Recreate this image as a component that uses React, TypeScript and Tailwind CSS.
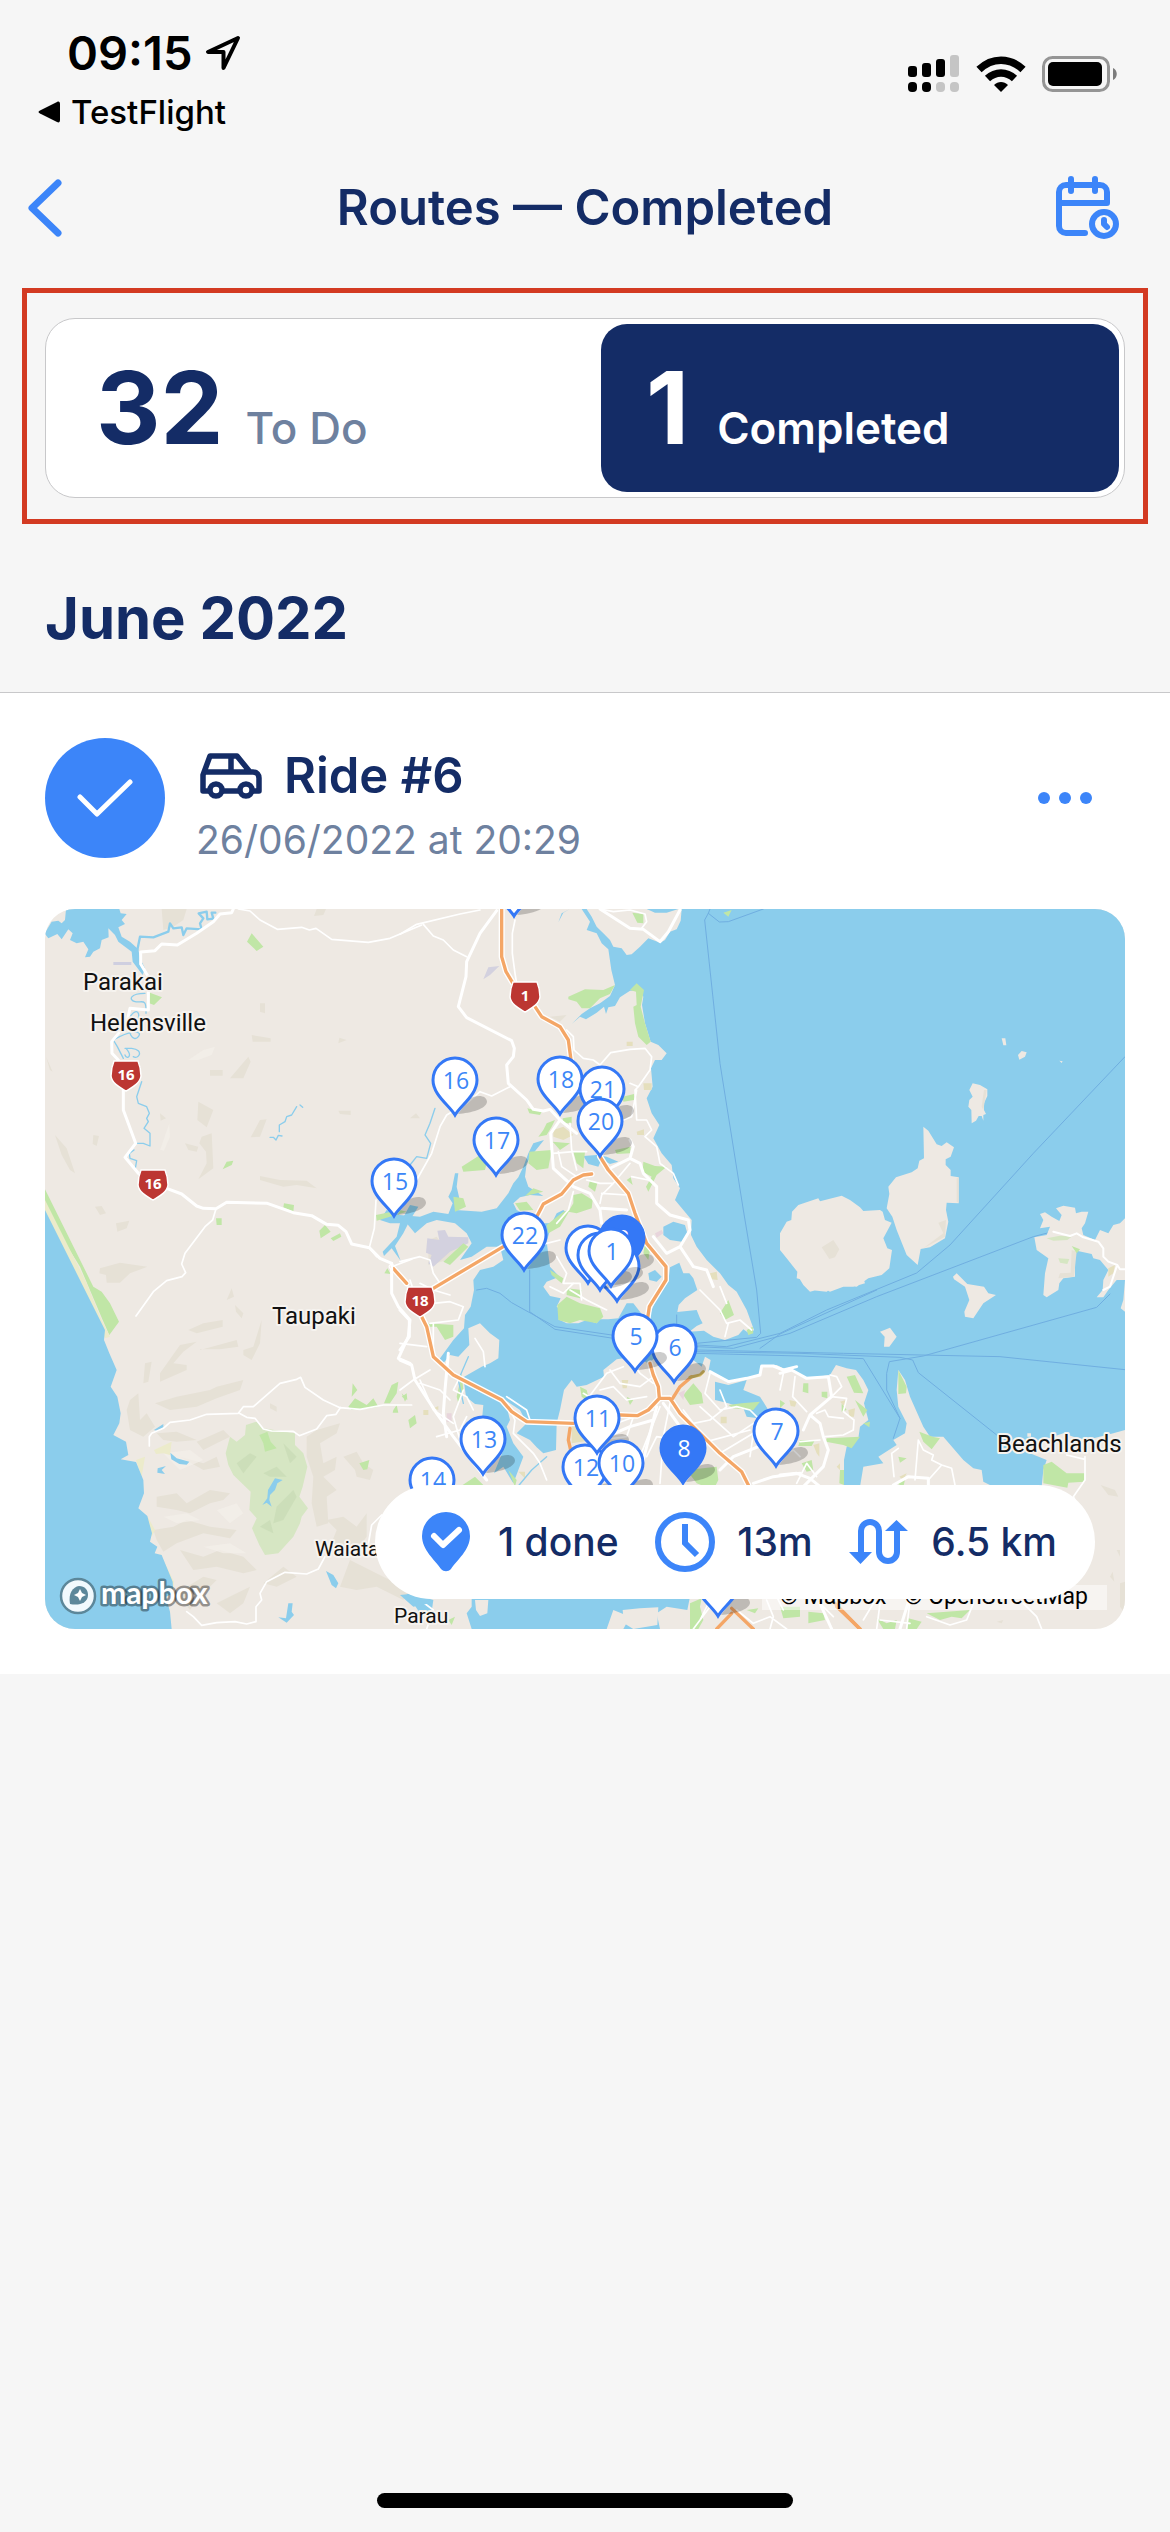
import React from "react";

const pins: { x: number; y: number; label?: string; solid?: boolean }[] = [
  { x: 469, y: -28 },
  { x: 410, y: 171, label: "16" },
  { x: 515, y: 170, label: "18" },
  { x: 557, y: 180, label: "21" },
  { x: 555, y: 212, label: "20" },
  { x: 451, y: 231, label: "17" },
  { x: 349, y: 272, label: "15" },
  { x: 479, y: 326, label: "22" },
  { x: 577, y: 329, label: "2", solid: true },
  { x: 572, y: 357 },
  { x: 543, y: 339 },
  { x: 555, y: 346 },
  { x: 566, y: 342, label: "1" },
  { x: 629, y: 438, label: "6" },
  { x: 590, y: 427, label: "5" },
  { x: 438, y: 530, label: "13" },
  { x: 387, y: 571, label: "14" },
  { x: 540, y: 558, label: "12" },
  { x: 552, y: 509, label: "11" },
  { x: 576, y: 554, label: "10" },
  { x: 638, y: 539, label: "8", solid: true },
  { x: 731, y: 522, label: "7" },
  { x: 673, y: 672 },
];

const shields = [
  { x: 81, y: 166, label: "16" },
  { x: 108, y: 275, label: "16" },
  { x: 480, y: 87, label: "1" },
  { x: 375, y: 392, label: "18" },
];

const places = [
  { x: 38, y: 81, size: "text-[24px]", label: "Parakai" },
  { x: 45, y: 122, size: "text-[24px]", label: "Helensville" },
  { x: 227, y: 415, size: "text-[24px]", label: "Taupaki" },
  { x: 270, y: 647, size: "text-[21px]", label: "Waiata" },
  { x: 349, y: 714, size: "text-[21px]", label: "Parau" },
  { x: 952, y: 543, size: "text-[24px]", label: "Beachlands" },
];

function WestTerrain() {
  return (
    <g transform="translate(-45 -57)" strokeLinejoin="round" strokeLinecap="round">
      <g fill="#e6e1d6">
        <path d="M395 57L470 57L460 90L430 110L400 120ZM860 57H888L880 75L852 78ZM75 735L110 775L135 850L120 840L95 795ZM195 950L215 948L228 970L210 975ZM258 1000L298 992L290 1015L262 1025ZM210 1135L270 1118L352 1130L300 1150L270 1178L230 1178L228 1155L208 1150ZM690 690L710 688L690 740L662 742ZM505 635L550 660L530 712L502 690ZM515 740L545 730L550 835L505 868L530 820L528 785L508 760ZM465 760L505 770L500 785L475 780ZM690 858L750 870L830 872L860 895L800 885L760 890L690 870ZM540 540H578V557H540ZM600 565L655 500L662 515L640 565ZM665 435L722 445V455H668ZM690 340H705V370L690 365ZM925 662H962V675L930 672ZM390 670L408 685L392 692ZM190 735L207 738L200 768L188 762ZM928 443L950 450L925 460ZM48 500L68 545L60 540Z" />
        <path d="M345 1420L365 1415L355 1475L340 1480ZM390 1450L450 1365L500 1355L460 1385L430 1420L470 1425L470 1440L390 1475ZM510 1380L620 1350L625 1370L570 1378L510 1378ZM640 1380L670 1370L695 1290L690 1360L665 1410L640 1395ZM375 1540L440 1520L540 1500L560 1490L640 1470L630 1500L560 1525L500 1550L420 1560ZM475 1320L520 1300L578 1290V1310L500 1330ZM590 1230L605 1195L612 1220ZM615 1245L640 1270L635 1285L618 1265ZM300 1530L325 1510L330 1590L350 1570L375 1610L340 1640L300 1620L290 1560ZM380 1630L440 1625L500 1650L440 1655L400 1650ZM500 1655L580 1620L600 1640L560 1660L520 1680ZM450 1700L520 1720L560 1700L570 1730L520 1740ZM380 1820L440 1810L470 1840L540 1800L600 1810L580 1830L540 1840L480 1870L440 1860L380 1850ZM370 1920L430 1910L470 1890L540 1910L620 1920L600 1945L520 1930L440 1960L400 1985L380 1950ZM450 1980L520 2000L570 1980L640 2000L680 2040L640 2050L560 2030L490 2040ZM830 1640L860 1620L930 1600L920 1630L870 1660L880 1720L920 1700L915 1740L880 1760L920 1800L890 1820L895 1900L860 1910L845 1840L850 1760L830 1700ZM890 1890L940 1880L980 1910L1010 1870L1010 1940L980 1980L900 1970L920 1920ZM960 2010L1060 2060L1140 2100L1120 2130L1040 2090L980 2100L930 2090ZM940 1700L980 1685L1000 1720L1030 1740L1020 1770L980 1760L975 1740ZM440 2110L520 2060L560 2070L500 2130L480 2160ZM560 2140L620 2110L660 2090L640 2140L600 2170ZM700 2080L760 2030L800 2060L740 2090ZM720 1540L740 1550V1565L720 1555Z" />
      </g>
      <g fill="#f3efe9" opacity="0.7">
        <path d="M475 510L520 480L555 470L545 495L505 510ZM390 780L418 700L420 740L402 782ZM400 1690L480 1680L520 1710L450 1740ZM400 1880L470 1870L510 1890L440 1900ZM520 1970L600 1960L650 1990L580 1990ZM560 1860L620 1840L640 1870L600 1900Z" />
      </g>
      <path fill="#d6e6c3" d="M648 1605L680 1595L700 1615L795 1630L795 1665L820 1690L832 1730L818 1790L808 1820L834 1855L815 1880L810 1900L790 1940L745 1990L705 1995L688 1965L666 1915L680 1885L658 1860L662 1805L610 1755L595 1725L587 1690L600 1640L620 1655L645 1635Z" />
      <path fill="#c8dab5" opacity="0.7" d="M620 1720L660 1690L680 1700L640 1750ZM700 1750L740 1730L770 1760L720 1760ZM740 1850L790 1800L800 1820L760 1890L730 1900ZM690 1910L720 1890L730 1930ZM760 1660L800 1700L780 1720Z" />
      <g fill="#c0e6a6">
        <path d="M688 1635L712 1625L722 1655L740 1675L705 1685L700 1660Z" />
        <path d="M665 130L700 170L680 183L651 155ZM360 308L396 322L372 345L358 340ZM762 940L792 945L790 965L760 952ZM558 985H575V1005H560ZM868 1022L885 1005L902 1025L872 1045ZM902 1045L930 1030L934 1040L910 1053ZM578 838L590 815L610 812L605 825ZM1038 975L1110 960L1130 965L1040 992ZM965 1520L968 1480L982 1500ZM955 1550L975 1525L1010 1545L1030 1525L1045 1550L1020 1555L965 1560ZM1062 1540L1085 1485L1105 1475L1100 1510L1080 1540ZM1090 1560L1100 1545L1105 1568H1088ZM988 1720L1018 1710L1012 1738L1000 1740ZM1115 1510L1130 1525L1125 1535ZM1063 1150L1072 1135L1082 1152Z" />
        <path d="M45 898L190 1190L215 1205L240 1240L267 1295L238 1335L218 1290L150 1130L45 960Z" />
      </g>
      <path fill="#ecebcb" d="M45 930L168 1175L215 1290L240 1340L225 1345L150 1175L45 965ZM318 1710L345 1700L335 1760ZM352 1878L375 1920L365 1940ZM390 1990L432 2075L430 2100L400 2050ZM372 1680L425 1655L420 1695L400 1690L378 1692Z" />
      <path fill="#8bcdec" d="M45 960L160 1190L225 1320L222 1350L238 1390L260 1440L242 1490L262 1520L272 1570L268 1600L250 1635L288 1655L295 1695L272 1708L318 1716L340 1770L342 1810L325 1855L352 1878L366 1930L360 1955L382 1970L374 1990L395 1995L428 2075L430 2110L408 2120L420 2165L425 2217H45Z" />
      <path fill="#8bcdec" d="M30 145L50 120L65 95L85 92L95 100L105 90L108 57H268L272 70L290 72L275 90L285 102L265 112L275 140L300 155L325 178L330 205L345 235L338 255L308 215L305 185L265 155L255 135L235 115L236 142L215 150L210 175L190 185L180 200L165 202L175 178L160 155L140 160L120 150L128 130L115 118L95 148L82 132L55 145L45 132Z" />
      <g fill="none" stroke="#8bcdec" strokeWidth="7">
        <path d="M322 180L330 140L370 142L415 125L420 100L430 115L455 112L460 135L470 115L515 118L510 100L520 85L506 70L530 65L532 88L550 86L545 68L556 68" />
      </g>
      <g fill="none" stroke="#8bcdec" strokeWidth="4">
        <path d="M345 310C300 310 295 330 315 335S350 320 348 370M300 380C330 340 335 390 310 405S310 460 325 440S300 420 250 450L262 470L280 505M285 475L305 475M288 475C310 500 290 510 285 495M305 475C345 480 325 510 310 500M335 575L320 620L325 640L350 650L358 670L350 685L355 695L342 715L360 730V768L340 760H320M312 780L298 790L300 805L320 812L316 835" />
        <path d="M800 650L785 675L770 680L765 695L748 705V725M720 742H730L738 750L745 736L756 738M810 645L818 652" />
      </g>
      <path fill="#8bcdec" d="M1165 950L1140 945L1110 1000L1100 1040L1058 1085L1062 1098L1085 1075L1112 1112L1095 1068L1120 1030L1140 990ZM372 1620L400 1602L400 1612L382 1624ZM421 1688L440 1705L478 1715L470 1724L448 1722L424 1708ZM383 1735L408 1728L395 1740L405 1752L382 1748ZM735 1765L758 1770L742 1780L735 1800L720 1815L718 1830L725 1850L710 1838L697 1845L712 1825L714 1800ZM888 2043L910 2055L925 2080L918 2095L905 2085ZM775 2140H788L785 2165L792 2175L770 2198L745 2182L768 2185ZM1110 2115L1160 2110L1200 2140L1150 2150Z" />
      <rect x="250" y="216" width="54" height="9" fill="#cfcfe0" />
      <g fill="none" stroke="#fff" strokeWidth="9">
        <path d="M610 57L605 68L570 72L550 95L500 130L442 165L395 162L375 182L332 186V222L355 260L355 360L300 355L290 400L245 455L246 490L265 510M280 595V660L317 760L285 802L325 850M410 895L455 912L500 948L520 955L558 956L590 937L712 940L790 968L845 977L890 1003L925 1006L948 1025L965 1062L1018 1073L1050 1105L1085 1120" />
        <path d="M1085 1120V1210L1105 1250L1140 1290L1135 1340L1105 1405L1140 1420" />
      </g>
      <g fill="none" stroke="#fff" strokeWidth="5">
        <path d="M625 57L660 63L690 90L742 118L815 112L838 120L858 115L905 148L1015 157L1080 145L1175 105M558 956L548 990L525 1010L465 1090L455 1122L467 1148L456 1160L410 1172L370 1205L318 1278M1038 930L1033 1015L1018 1073L1040 1100M1085 1130L1145 1108" />
        <path d="M358 1668V1640L365 1630L400 1615L420 1597L480 1590L530 1573L625 1570L640 1550H670L750 1480L800 1468L812 1462L825 1492L880 1530L930 1553L990 1558L1060 1545L1145 1545M628 1570L650 1582L675 1585L700 1617L725 1623L790 1624L808 1637L860 1617L890 1577L918 1573L932 1552M1055 1875L1025 1905L1010 1990M885 2000L865 2037L830 2052L765 2047L710 2075L690 2110L695 2130L678 2150V2195L650 2202L615 2195L560 2198L515 2206L490 2180L470 2165" />
      </g>
    </g>
  );
}

function CentralTerrain() {
  return (
    <g transform="translate(1065 -57)" strokeLinejoin="round" strokeLinecap="round">
      <path
        fill="#8bcdec"
        d="M845 57L842 92L830 118L810 125L795 150L780 158L745 145L720 170L695 193L680 195L665 175L640 170L630 150L610 130L590 110L575 80L560 57H545L570 95L560 120L590 130L605 160L625 178L634 240L645 285L630 318L600 340L570 355L545 372L515 402L540 380L558 388L590 368L612 350L618 372L625 352L645 348L660 322L690 302L718 300L730 320L726 345L735 400L752 455L775 465L800 490L785 510L765 510L753 535L758 590L740 625L755 670L778 705L760 745L785 790L815 825L820 865L840 895L825 930L850 960L875 990L873 1035L890 1070L920 1110L960 1150L985 1185L1010 1205L1040 1260L1062 1320L1050 1332L1030 1318L1015 1335L975 1350L940 1340L912 1322L868 1325L890 1308L908 1300L900 1285L890 1260L832 1266L836 1245L855 1225L892 1200L880 1165L868 1150L850 1150L838 1118L810 1132L805 1175L770 1220L748 1280L735 1285L700 1240L680 1240L655 1285L625 1288L600 1288L590 1300L560 1290L535 1300L500 1300L475 1288L490 1265L470 1250L482 1225L450 1218L430 1190L440 1175L478 1160L450 1130L440 1055L450 1020L480 1000L500 970L490 960L470 970L455 1000L430 1000L400 985L350 960L340 940L360 922L390 915L430 918L385 890L375 860L380 820L400 790L432 750L400 760L385 790L370 830L355 862L340 880L325 910L290 955L245 965L200 962L165 960L178 925L170 890L175 850H165L155 900L145 920L158 940L145 972L100 965L60 980L0 975L-40 960L-60 990L-30 1000L20 1000L45 1030L80 1000L110 990L165 1000L200 1030L215 1060L180 1110L215 1100L260 1070L300 1070L310 1110L280 1130L240 1140L220 1170L222 1200L212 1250L195 1275L192 1315L160 1350L118 1408L130 1420L150 1395L175 1400L208 1365L205 1315L240 1300L270 1330L298 1350L295 1405L270 1420L245 1430L190 1462L198 1520L225 1542L250 1545L245 1600L280 1640L310 1680L282 1750L310 1730L340 1780L370 1700L340 1660L320 1610L330 1590L315 1530L360 1560L380 1600L350 1630L390 1650L410 1672L430 1690L468 1680L470 1600L480 1560L492 1500L515 1470L530 1490L560 1485L612 1460L610 1440L650 1408L700 1400L745 1420L770 1400L880 1410L905 1430L915 1400L932 1410L925 1445L985 1480L1040 1465L1080 1455L1080 1430L1130 1425L1160 1440L1180 1440L1220 1465L1290 1455L1308 1425L1340 1435L1368 1440L1390 1470L1405 1500L1392 1540L1405 1590L1380 1610L1375 1645L1340 1670L1332 1710V1790H1380L1390 1730L1450 1720L1435 1700L1490 1665L1480 1650L1515 1630L1520 1600L1495 1550L1490 1500L1495 1440L1515 1470L1530 1520L1570 1610L1590 1640L1630 1640L1690 1710L1720 1735L1745 1740L1750 1775L1800 1800L1925 1790L1930 1740L1940 1710L1890 1690L1930 1650L1990 1630L2020 1640L2060 1650L2140 1630L2175 1620V57Z"
      />
      <path fill="#8bcdec" d="M475 97L485 70L510 57L490 68ZM740 57L765 68L800 68L835 57ZM550 798L590 795L620 800L655 815L630 822L605 808L595 830L565 822ZM790 1010L820 995L855 1005L862 1030L845 1055L810 1050L790 1035ZM745 1150L765 1140L785 1160L770 1175L748 1170ZM945 1475L985 1485L1040 1470L1030 1500L1080 1520L1105 1560L1075 1585L1040 1580L1030 1555L985 1540L945 1530ZM215 2110L240 2050L700 2110L850 2090L870 2120L862 2160L800 2150L770 2170L780 2217H670L690 2180L640 2160L620 2217H215L200 2170L215 2150ZM-10 2105L50 2115L100 2130L95 2165L60 2170L40 2140Z" />
      <path fill="#eee9e3" d="M225 2130H265L262 2170L240 2178L228 2160ZM668 2160L720 2155L775 2152L772 2205L700 2217L672 2200ZM780 2165L850 2175V2185L785 2180Z" />
      <path fill="#e6e1d6" d="M85 1050L110 1040L130 1065L200 1060L165 1105L85 1125ZM450 380L500 375L480 395ZM30 685L48 670L60 685ZM-30 855L20 850L40 880L-30 880Z" />
      <path fill="#d3d1df" d="M112 1022L135 1020L145 1040L205 1042L205 1060L150 1085L100 1130L85 1120L95 1095L78 1088L82 1045L118 1050ZM250 268L265 232L298 228L270 255Z" />
      <path
        fill="#c0e6a6"
        d="M505 320L555 298L610 300L645 285L630 312L600 325L570 355L545 355L530 335L505 328ZM710 280L732 300L722 350L735 400L752 455L740 465L715 440L705 400L700 350L710 345L708 305L690 300ZM697 68L730 72V100L712 98ZM970 68L995 60L985 80ZM185 830L240 795L260 820L255 840L190 845ZM388 785L455 780L445 835L410 840L385 820ZM430 720L440 700L465 690L455 710L440 735L415 740ZM160 920L190 925L198 950L165 965ZM345 940L380 935L400 960L360 962ZM730 815L765 828L800 830L770 855L745 905L738 890L755 860L728 845ZM520 915L545 910L578 930L575 955L530 970L505 965L520 940ZM440 1005L490 965L510 960L480 1010L445 1030ZM458 755L510 760L480 780ZM520 785H555L550 835L530 820ZM645 780L692 770L690 790L650 792ZM668 620L702 612V630L670 635ZM382 655L425 665L420 675L388 670ZM488 685L515 680V700L490 700ZM130 1115L190 1060L205 1070L150 1125ZM570 870L592 880L585 905L565 890ZM400 895L430 905L375 918ZM680 870L692 862L698 885ZM735 1060L750 1080L745 1110L730 1090Z"
      />
      <path
        fill="#c0e6a6"
        d="M472 1245L500 1220L540 1240L600 1255L610 1280L590 1300L540 1290L510 1300L475 1290ZM500 1195L545 1200L540 1225L500 1215ZM85 1300L160 1305V1340L135 1350L110 1310L80 1310ZM960 1270L985 1230L1002 1275L975 1290ZM1040 1320L1058 1310L1060 1330L1045 1335ZM850 1515L880 1480L905 1510L910 1540L870 1545ZM860 1740L950 1730L955 1770L940 1800L890 1780ZM180 1790L225 1760L250 1785ZM170 1520L185 1450L190 1500L175 1540ZM680 1520L700 1530L690 1545ZM985 1545L1025 1540L1080 1535L1060 1560L1000 1555ZM5 1520L20 1510L22 1530ZM25 1590L45 1575L50 1600L30 1615ZM540 1490L560 1500L570 1540L545 1520ZM870 2140L905 2125L900 2150L910 2190L895 2217H870ZM1040 2160L1075 2155L1065 2170ZM145 2190L165 2180L155 2205ZM1140 2150H1200V2180L1150 2185ZM1120 1570L1165 1560L1170 1590ZM325 1740L350 1770L345 1790ZM450 1140L490 1165L485 1180L455 1155Z"
      />
      <path fill="#e5dfbd" d="M680 455H698V468H680ZM710 725L732 718V735H712ZM460 720L490 710L520 735L490 750L460 740ZM730 580H755V600H732ZM930 1150L950 1145L953 1170L935 1168ZM515 1590L570 1570L600 1600L580 1650L515 1660ZM665 1470H685L680 1495H668ZM70 1560H85V1575H70ZM100 1555L115 1548V1560ZM355 1745H375V1765ZM962 1580H980V1600H962ZM1060 2090L1090 2080L1080 2110Z" />
      <path fill="#e8d5dc" d="M765 1030L785 1020L790 1030L770 1043ZM835 1510L855 1500L850 1530ZM140 1570H155V1595H140Z" />
      <g fill="none" stroke="#8bcdec" strokeWidth="4">
        <path d="M105 655L90 700L75 735L92 760L80 805L50 800L30 825L0 815M540 1100L530 1130M205 1400L175 1470L190 1540M345 1800L395 1740L440 1700" />
      </g>
      <g fill="none" stroke="#fff" strokeWidth="5">
        <path d="M0 133L50 103L180 72L240 60M70 103L100 138L130 150L160 180L200 200M345 90L337 130V190L345 250L350 280M500 420L520 440L522 480L550 505L580 510L600 525L632 488L690 478L735 475L755 500L750 540L715 590L690 580M715 590L705 600L710 690L740 690L755 720L735 740L770 770L780 820L820 850L835 885M710 600L695 680L670 690M240 605L275 618L330 590M240 605L200 640L140 675L120 710L95 790L50 870M600 600L590 550" />
        <path d="M460 790L520 785L560 785M475 785L485 830L530 860M510 700L515 780L530 840M640 880L605 915L600 940M605 910L680 915M560 870L600 880L640 880L690 820M520 905L505 960L470 1000M695 860L745 870M400 1080L440 1060L480 1050M500 1050L510 1120L540 1150L580 1170M470 1100L500 1150L490 1180L540 1180L545 1230M0 1115L60 1100L90 1110L100 1150L120 1180M60 1180L100 1200L150 1215" />
        <path d="M30 1170L40 1200L100 1240L150 1235L190 1250L175 1290L90 1300M100 1300L100 1400M0 1360L80 1370M225 1345L250 1385L255 1430M175 1470L160 1500L200 1520L220 1560M0 1500L40 1470L90 1440M60 1470L100 1560L160 1600M190 1500L160 1580L180 1650M60 1480L120 1500L150 1530M110 1640L180 1620L200 1580M330 1560L345 1590L340 1630L400 1690L420 1720L440 1770M320 1520L380 1560L390 1590" />
        <path d="M560 1530L620 1450L670 1430M600 1500L640 1490L680 1530L740 1520M630 1440L660 1480L720 1490L760 1460M690 1410L720 1450L760 1480M550 1510L600 1540L650 1560M700 1580L680 1640L600 1650M650 1600L760 1560M720 1700L780 1550M740 1700L770 1640L840 1650L880 1620M810 1540L790 1640L780 1780M850 1560L880 1600L930 1590L980 1550L960 1500M930 1450L915 1510L960 1560L1010 1550L1050 1560L1090 1600M900 1550L1000 1640L1060 1600M860 1700L900 1660L1050 1620M960 1690L1060 1630L1050 1700M985 1300L975 1340M900 1200L960 1260L980 1300L1020 1290L1055 1320M960 1190L980 1240M450 1190L490 1210L520 1180M510 1200L560 1230L620 1260" />
        <path d="M80 2217L100 2160L60 2130M880 2217L930 2150L960 2130M1010 2160L1060 2200L1110 2180L1160 2217M1100 2130L1120 2180L1110 2217M1130 2120L1150 2160M930 2130L900 2190" />
        <path d="M600 57L640 65L690 60L735 72L740 95L725 115" />
      </g>
      <g fill="none" stroke="#fff" strokeWidth="9">
        <path d="M290 62L240 130L200 215L198 260L175 350L200 383L335 452L343 475L340 500L320 525L325 580L380 630L400 658L430 663L450 658L480 690L530 730M480 690L452 730L460 835L520 890L570 910L600 960L605 1000M605 955L680 960M620 840L690 805L700 770L690 750M690 805L720 820L730 850L770 890V940L810 975L865 990L870 1020L840 1070L800 1090L760 1040M840 1070L880 1130L920 1140L940 1190M600 57L690 115L730 118L780 155L805 125L840 60" />
        <path d="M0 1260L28 1290V1340L0 1380M0 1410L35 1425L45 1470L110 1570L160 1640L260 1770M145 1390L135 1500L130 1570L140 1640M620 1640L690 1610L760 1590M770 1550L745 1650L720 1750M790 1540L840 1610M930 1445L985 1475L1040 1465L1080 1455L1085 1428L1120 1428L1150 1440L1190 1430M960 1740L1000 1700L1100 1660M1060 1780L1120 1760L1200 1750" />
      </g>
      <g fill="none" stroke="#fff" strokeWidth="18">
        <path d="M305 57V200L318 245L345 290M405 350L425 380L480 410L505 450L513 510M575 852L550 855L520 870L485 912L430 942L400 1000M310 1070L100 1195M600 800L625 840L685 910L705 970L740 1060L798 1130V1170L748 1250L742 1290" />
        <path d="M-25 1130L20 1180M65 1280L80 1310L100 1400L160 1455L305 1530L335 1565L380 1595L520 1600M660 1575L712 1577L745 1560L778 1525L810 1525L840 1570L900 1630L960 1690L1025 1745L1045 1785M750 1420L760 1455L775 1490L778 1525" />
      </g>
      <g fill="none" stroke="#f4a666" strokeWidth="10">
        <path d="M305 57V200L318 245L345 290M405 350L425 380L480 410L505 450L513 510M575 852L550 855L520 870L485 912L430 942L400 1000M310 1070L100 1195M600 800L625 840L685 910L705 970L740 1060L798 1130V1170L748 1250L742 1290" />
        <path d="M-25 1130L20 1180M65 1280L80 1310L100 1400L160 1455L305 1530L335 1565L380 1595L520 1600M660 1575L712 1577L745 1560L778 1525L810 1525L840 1570L900 1630L960 1690L1025 1745L1045 1785M750 1420L760 1455L775 1490L778 1525" />
        <path d="M510 1615L505 1650L512 1680M818 1525L840 1490L875 1460M995 2155L1060 2217M995 2170L950 2217M1310 2150L1380 2217" />
      </g>
      <path fill="none" stroke="#d4b85f" strokeWidth="9" d="M870 1462L900 1455L910 1445" />
      <g fill="none" stroke="#6faee0" strokeWidth="3">
        <path d="M1090 57L985 95L958 96L925 70L930 57M925 70L914 90L960 520L1030 960L1070 1200L1082 1330L1070 1342L890 1360M389 1140V1265L465 1318L640 1345M230 1200L260 1195L300 1210L335 1238L465 1310L635 1335M830 1310V1275M890 1380L1330 1390L1800 1400L2175 1439M890 1385L1200 1390L1500 1402L1538 1410L1555 1448L1790 1635M890 1390L1200 1398L1390 1406L1500 1585L1480 1645M1500 1585L1460 1500V1450L1468 1415L1570 1398L2090 1252L2130 1212M890 1365L980 1370L1140 1330L1280 1260L1550 1149L1650 1065L1900 790L2175 500M890 1370L1000 1375L1170 1330L1430 1220L1900 1040L1950 1027M1080 1375L1140 1332L1430 1200" />
      </g>
    </g>
  );
}

function EastTerrain() {
  return (
    <g transform="translate(2205 -57)" strokeLinejoin="round" strokeLinecap="round">
      <path
        fill="#eee9e3"
        d="M665 445H676L679 466H670ZM714 495L725 483L740 487L735 500L718 509ZM838 512L848 514L845 519ZM578 580L600 585L622 598V618L612 640V660L618 672L610 675V692L605 678H596L588 692L575 700L574 660L565 650L568 630L578 620L568 600ZM430 710L445 722L470 763L485 768L500 757L522 772L512 800L497 808V825L512 840V858L536 862V940L500 938L498 960L505 995L495 1045L450 1072L422 1077L413 1125L380 1095L350 1020L337 980L320 955L328 912L325 890L348 862L395 847L413 835L418 812L432 805ZM115 925L120 934L185 917L210 930L240 952L250 963L300 960L308 965L315 990L335 998L310 1045L322 1075L336 1080L328 1135L305 1155L265 1165L230 1190L190 1185L160 1190L140 1205L90 1200L70 1170L50 1165L52 1145L20 1105L0 1080V1030L20 995L34 990L36 965L55 945ZM55 1160L250 1165L255 1180L220 1190L190 1190L150 1205L130 1195L90 1205L70 1185ZM519 1160L530 1150L545 1165L562 1182L612 1190L625 1210L648 1215L610 1240L580 1285L555 1280L553 1265L568 1230L555 1190L522 1168ZM300 1325L330 1313L350 1340L328 1370L312 1370L314 1340ZM780 1015L790 990L780 972L795 967L815 980L838 993L845 975L828 955L850 947L885 953L888 970L905 965L925 965L915 1000L905 1015L910 1035L945 1050L960 1020L985 1030L1000 1005L1020 1000L1035 985V1265L1022 1255L1030 1230L1035 1170H1010L985 1200L970 1222L950 1222L968 1200L970 1170L985 1140L960 1110L940 1105L935 1092L890 1082L885 1100V1160L850 1165L838 1180L835 1200L800 1222L790 1215L795 1150L805 1105L770 1080L763 1042L800 1035L810 1010ZM742 1630H753V1640H742Z"
      />
      <path fill="#e6e1d6" d="M125 1072L160 1050L178 1078L165 1102L148 1107ZM475 998L498 990L495 1040L430 1075L490 1030ZM530 865L536 862V938L530 935ZM612 600L620 600L610 660L605 650ZM875 1080L890 1085L882 1160L835 1165L840 1150L872 1148ZM962 1785L1005 1800L1015 1820L985 1815ZM990 2060L998 2045L1003 2075ZM1020 2080L1035 2075V2170L1020 2150ZM1010 1980H1020V2000ZM650 2195L670 2190L665 2200Z" />
      <path fill="#c0e6a6" d="M875 1068L900 1078L890 1090ZM355 1440L380 1490L378 1510L355 1512ZM790 1725L815 1715L860 1750L913 1750V1775L865 1778L862 1793L790 1780ZM418 1625L458 1640L480 1645L455 1678L430 1655ZM140 1645L240 1640L215 1675L190 1665L138 1655ZM200 1460L225 1455L250 1510L222 1508ZM70 1480H85V1510L68 1505ZM125 1505H142V1525L125 1520ZM225 1530L262 1560L250 1580ZM60 1650H105L95 1668H55ZM65 1720L95 1710L100 1740L80 1745ZM180 1740H192V1785L178 1780ZM355 1700L380 1705L360 1718ZM250 1600L270 1595L268 1612ZM185 1540L200 1560L185 1565ZM0 1530L15 1540L0 1555ZM85 2165L130 2170L135 2190L85 2200ZM290 2185L320 2200L350 2190L345 2217H310ZM385 2185L425 2195L410 2217H382ZM440 2170L500 2165L570 2160L545 2185L515 2180L480 2190ZM350 1780L375 1770L370 1790Z" />
      <path fill="#d6e6c3" d="M800 1045L840 1037L875 1040L862 1050L820 1052ZM835 1105L868 1107L862 1122L840 1118Z" />
      <path fill="#e5dfbd" d="M28 1530L50 1535L45 1550L32 1548ZM180 1535L198 1530L195 1550ZM205 1560L225 1555L222 1580H208ZM100 1665L118 1660V1700L110 1690ZM985 1135L1005 1125L1000 1150L985 1160ZM358 1760L380 1750L370 1770ZM170 1730L180 1720V1740Z" />
      <g fill="none" stroke="#fff" strokeWidth="5">
        <path d="M10 1450L0 1500M45 1460L38 1520L80 1565M150 1455L170 1460L185 1490L155 1520L200 1525L190 1565L222 1590L220 1620L190 1635L135 1640M110 1570L135 1560L145 1580L190 1585M60 1655L120 1650M0 1700L40 1680L60 1700M50 1780L80 1720L110 1760M55 1640L30 1600M355 1675L335 1690L342 1760M415 1650L405 1770M415 1650L430 1680L460 1695L455 1710L485 1725L515 1735L525 1785M485 1725L445 1770M290 2217L300 2140M250 2190L280 2140M380 2217L390 2130M440 2180L510 2205L560 2190L580 2140M730 2140L770 2180L785 2217M915 1700V1770L880 1820L885 1830M860 1695L915 1708M300 2190L390 2200M120 2140L160 2180" />
      </g>
      <g fill="none" stroke="#fff" strokeWidth="9">
        <path d="M0 1450L35 1440L80 1465L145 1460L155 1520L90 1575L70 1620M90 1575L120 1600L130 1640L145 1680L130 1730L70 1790M0 1755L50 1750L90 1765L120 1790M340 1785L385 1760L445 1765V1790M120 2140L155 2217M390 2120L360 2217" />
        <path strokeWidth="6" d="M820 1025L870 1038L890 1030L910 1042L955 1055L970 1075V1100L985 1115L1012 1125L1020 1138H1035M1010 1130L990 1190L970 1200" />
      </g>
      <g fill="none" stroke="#f4a666" strokeWidth="10">
        <path d="M165 2140L240 2217" />
      </g>
    </g>
  );
}

function RouteMap() {
  return (
    <svg viewBox="0 0 1080 720" className="block h-auto w-full bg-[#eee9e3]" role="img" aria-label="Map of route stops around Auckland">
      <g transform="scale(0.333333)">
        <CentralTerrain />
        <WestTerrain />
        <EastTerrain />
      </g>
      {shields.map((s, i) => (
        <g key={i} transform={`translate(${s.x} ${s.y})`}>
          <path d="M-12 -14H12C15 -7 15 -3 15 1C14 9 5 13 0 16C-5 13 -14 9 -15 1C-15 -3 -15 -7 -12 -14Z" fill="#bc3632" stroke="#fff" strokeWidth="1.5" />
          <text y="5" textAnchor="middle" fill="#fff" className="font-['Noto_Sans',sans-serif] text-[15px] font-bold">
            {s.label}
          </text>
        </g>
      ))}
      {places.map((p) => (
        <text
          key={p.label}
          x={p.x}
          y={p.y}
          fill="#111"
          stroke="#f6f3ef"
          strokeWidth="4"
          strokeLinejoin="round"
          paintOrder="stroke"
          className={`font-[Roboto,sans-serif] ${p.size}`}
        >
          {p.label}
        </text>
      ))}
      {pins.map((p, i) => (
        <g key={i} transform={`translate(${p.x} ${p.y})`}>
          <path d="M3 34L14 19C22 14 32 15 32 22C31 29 16 33 3 34Z" fill="#000" opacity="0.2" />
          <path
            d="M0 35C-6 25 -22 15 -22 0A22 22 0 0 1 22 0C22 15 6 25 0 35Z"
            fill={p.solid ? "#3478f6" : "#fff"}
            stroke="#3478f6"
            strokeWidth="3"
          />
          {p.label && (
            <text x="1" y="9" textAnchor="middle" fill={p.solid ? "#fff" : "#3b86f7"} className="font-['Open_Sans',sans-serif] text-[23px]">
              {p.label}
            </text>
          )}
        </g>
      ))}
      <g>
        <circle cx="33" cy="687" r="17" fill="#f1f9fd" stroke="#5c879a" strokeWidth="2.5" />
        <path d="M25 695C23 684 28 678 34 677C40 677 43 681 43 686C43 694 34 697 25 695Z" fill="#5c879a" />
        <path d="M35 680L37 684L41 686L37 688L35 692L33 688L29 686L33 684Z" fill="#fff" />
        <text
          x="56"
          y="695"
          fill="#fff"
          stroke="#000"
          strokeOpacity="0.38"
          strokeWidth="5"
          strokeLinejoin="round"
          paintOrder="stroke"
          className="font-[Lato,sans-serif] text-[30px] font-bold"
        >
          mapbox
        </text>
      </g>
    </svg>
  );
}

function StatusBar() {
  return (
    <div className="flex justify-between pr-[52px] pl-[38px] text-black">
      <div>
        <div className="flex h-[60px] items-center gap-3 pl-[29px] pt-[46px]">
          <span className="text-[47px] leading-[56px] font-semibold">09:15</span>
          <svg viewBox="0 0 36 40" className="h-[40px] w-[36px]" fill="none" stroke="currentColor" strokeWidth="4" strokeLinejoin="round" aria-hidden="true">
            <path d="M33 5L3 19H18.500V35Z" />
          </svg>
        </div>
        <button className="mt-[30px] flex items-center gap-[11px] text-[33px] leading-[44px] font-medium">
          <svg viewBox="0 0 22 22" className="h-[22px] w-[22px]" fill="currentColor" aria-hidden="true">
            <path d="M2 9.500L19 1C21 0 22 1 22 3V19C22 21 21 22 19 21L2 12.500C0 11.500 0 10.500 2 9.500Z" />
          </svg>
          TestFlight
        </button>
      </div>
      <div className="mt-[54px] flex h-[40px] items-center gap-[16px]">
        <svg viewBox="0 0 52 38" className="h-[38px] w-[52px]" aria-hidden="true">
          <g fill="#000">
            <rect x="0" y="11" width="9" height="11" rx="3" />
            <rect x="14" y="8" width="9" height="14" rx="3" />
            <rect x="28" y="4" width="9" height="18" rx="3" />
            <rect x="0" y="27" width="9" height="10" rx="4" />
            <rect x="14" y="27" width="9" height="10" rx="4" />
          </g>
          <g fill="#c5c5c5">
            <rect x="42" y="0" width="9" height="22" rx="3" />
            <rect x="28" y="27" width="9" height="10" rx="4" />
            <rect x="42" y="27" width="9" height="10" rx="4" />
          </g>
        </svg>
        <svg viewBox="0 0 50 36" className="h-[36px] w-[50px]" fill="none" stroke="#000" strokeWidth="7.500" aria-hidden="true">
          <path d="M3 13.500C16 1 34 1 47 13.500" />
          <path d="M11.500 22.500C19.500 15 30.500 15 38.500 22.500" />
          <path d="M18 29C22 25 28 25 32 29L25 36Z" fill="#000" stroke="none" />
        </svg>
        <svg viewBox="0 0 76 36" className="h-[36px] w-[76px]" aria-hidden="true">
          <rect x="1.500" y="1.500" width="65" height="33" rx="9" fill="none" stroke="#959595" strokeWidth="3" />
          <rect x="6" y="6" width="54" height="24" rx="5" fill="#000" />
          <path d="M71 12C76 14 76 22 71 24Z" fill="#7c7c7c" />
        </svg>
      </div>
    </div>
  );
}

export default function App() {
  return (
    <div className="flex min-h-screen flex-col bg-[#f6f6f6] font-[Inter,sans-serif] text-[#142c66]">
      <StatusBar />

      <header className="mt-[32px] flex h-[84px] items-center justify-between pr-[50px] pl-[26px]">
        <button aria-label="Back" className="w-[90px]">
          <svg viewBox="0 0 38 60" className="h-[60px] w-[38px]" fill="none" stroke="#3c85f9" strokeWidth="7" strokeLinecap="round" strokeLinejoin="round">
            <path d="M32 5L6 30L32 55" />
          </svg>
        </button>
        <h1 className="text-[49px] leading-[60px] font-semibold">Routes — Completed</h1>
        <button aria-label="Schedule" className="flex w-[66px] justify-end">
          <svg viewBox="0 0 64 64" className="h-[64px] w-[64px]" fill="none" stroke="#3c85f9" strokeWidth="6" strokeLinecap="round" strokeLinejoin="round">
            <path d="M29 57H10C6 57 3 54 3 50V16C3 12 6 9 10 9H44C48 9 51 12 51 16V27H3M15 3V15M39 3V15" />
            <circle cx="48" cy="48" r="12" />
            <path d="M48 44V48L51 51" />
          </svg>
        </button>
      </header>

      <section className="mx-[22px] mt-[38px] border-[5px] border-[#d33a22] px-[18px] pt-[25px] pb-[21px]">
        <div className="grid grid-cols-2 rounded-[30px] border border-[#c8c8ca] bg-white p-[5px]" role="tablist">
          <button role="tab" aria-selected="false" className="flex h-[168px] items-baseline gap-[22px] pt-6 pl-[45px] text-left">
            <span className="text-[100px] leading-[120px] font-bold">32</span>
            <span className="text-[44px] leading-[52px] font-medium text-[#6e819f]">To Do</span>
          </button>
          <button role="tab" aria-selected="true" className="ml-4 flex h-[168px] items-baseline gap-[28px] rounded-[26px] bg-[#142c66] pt-6 pl-[45px] text-left text-white">
            <span className="text-[100px] leading-[120px] font-bold">1</span>
            <span className="text-[44px] leading-[52px] font-semibold">Completed</span>
          </button>
        </div>
      </section>

      <h2 className="border-b border-[#c8c8ca] px-[45px] pt-[58px] pb-[38px] text-[58px] leading-[72px] font-bold">June 2022</h2>

      <article className="bg-white px-[45px] py-[45px]">
        <div className="flex h-[120px] items-start">
          <span className="flex h-[120px] w-[120px] items-center justify-center rounded-full bg-[#3c85f9]">
            <svg viewBox="0 0 56 40" className="h-[40px] w-[56px]" fill="none" stroke="#fff" strokeWidth="5" strokeLinecap="round" strokeLinejoin="round" aria-hidden="true">
              <path d="M3 19L20 36L53 4" />
            </svg>
          </span>
          <div className="ml-[31px] flex-1 pt-3">
            <h3 className="flex items-center gap-[22px] text-[49px] leading-[52px] font-semibold">
              <svg viewBox="0 0 62 46" className="ml-1 h-[46px] w-[62px]" fill="none" stroke="currentColor" strokeWidth="5.500" strokeLinejoin="round" aria-hidden="true">
                <path d="M9 38H3V22L10 3H37L50 19H53C57 19 59 22 59 25V38H53M23 38H39M4 19H50M31 3V19" />
                <circle cx="16" cy="37" r="6" />
                <circle cx="46" cy="37" r="6" />
              </svg>
              Ride #6
            </h3>
            <p className="mt-4 text-[39px] leading-[44px] text-[#6e819f]">26/06/2022 at 20:29</p>
          </div>
          <button aria-label="More options" className="flex gap-[9px] self-center px-[33px] py-6">
            <span className="h-[12px] w-[12px] rounded-full bg-[#3c85f9]" />
            <span className="h-[12px] w-[12px] rounded-full bg-[#3c85f9]" />
            <span className="h-[12px] w-[12px] rounded-full bg-[#3c85f9]" />
          </button>
        </div>

        <div className="relative mt-[51px] overflow-hidden rounded-[30px]">
          <RouteMap />
          <div className="absolute right-[18px] bottom-[19px] flex h-[25px] items-center gap-[18px] bg-white/50 pr-[19px] pl-[18px] font-[Roboto,sans-serif] text-[23px] text-black">
            <a href="#mapbox">© Mapbox</a>
            <a href="#openstreetmap">© OpenStreetMap</a>
          </div>
          <ul className="absolute right-[30px] bottom-[30px] flex h-[114px] w-[720px] items-center justify-between rounded-full bg-white pr-[38px] pl-[47px] text-[39px] leading-[48px] font-medium">
            <li className="flex items-center gap-[28px]">
              <svg viewBox="0 0 48 60" className="h-[60px] w-[48px]" aria-hidden="true">
                <path d="M24 0A24 24 0 0 1 48 24C48 38 35 48 29 57C26 60 22 60 19 57C13 48 0 38 0 24A24 24 0 0 1 24 0Z" fill="#3c85f9" />
                <path d="M12 24L21 33L37 18" fill="none" stroke="#fff" strokeWidth="6" strokeLinecap="round" strokeLinejoin="round" />
              </svg>
              1 done
            </li>
            <li className="flex items-center gap-[22px]">
              <svg viewBox="0 0 60 60" className="h-[60px] w-[60px]" fill="none" stroke="#3c85f9" strokeWidth="6" aria-hidden="true">
                <circle cx="30" cy="30" r="27" />
                <path d="M30 12V31L42 43" />
              </svg>
              13m
            </li>
            <li className="flex items-center gap-[22px]">
              <svg viewBox="0 0 60 46" className="h-[46px] w-[60px]" aria-hidden="true">
                <path d="M12 36V12A9 9 0 0 1 30 12V33A9 9 0 0 0 48 33V10" fill="none" stroke="#3c85f9" strokeWidth="6" />
                <path d="M0 33H23L11.500 45ZM36 12L47.500 1L59 12Z" fill="#3c85f9" />
              </svg>
              6.5 km
            </li>
          </ul>
        </div>
      </article>

      <div className="mx-auto mt-auto mb-6 h-[15px] w-[416px] rounded-full bg-black" />
    </div>
  );
}
